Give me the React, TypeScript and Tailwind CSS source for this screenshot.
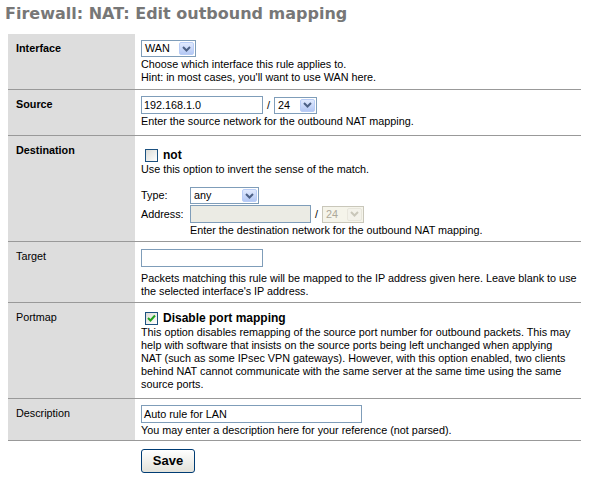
import React from "react";

const font = { fontFamily: '"Liberation Sans", Arial, sans-serif' };
const titleFont = { fontFamily: '"DejaVu Sans", Verdana, sans-serif' };

function Chevron({ disabled }: { disabled?: boolean }) {
  return (
    <svg width="9" height="6" viewBox="0 0 9 6">
      <path
        d="M1 1 L4.5 4.5 L8 1"
        fill="none"
        stroke={disabled ? "#c9c7ba" : "#4d6185"}
        strokeWidth="2"
      />
    </svg>
  );
}

function Select({ value, width, disabled }: { value: string; width: string; disabled?: boolean }) {
  return (
    <div
      className={`flex h-[17px] items-stretch border ${
        disabled ? "border-[#c9c7ba] bg-[#f5f4ea] text-[#aca899]" : "border-[#7f9db9] bg-white text-black"
      } ${width}`}
    >
      <span className="flex-1 pl-[3px] leading-[15px]">{value}</span>
      <span
        className={`m-px flex w-[15px] items-center justify-center rounded-[2px] border ${
          disabled
            ? "border-[#e8e6dc] bg-[#f3f2ea]"
            : "border-[#b9cdf6] bg-gradient-to-b from-[#e1eafe] to-[#b4c8f4]"
        }`}
      >
        <Chevron disabled={disabled} />
      </span>
    </div>
  );
}

function Input({ value, width, disabled }: { value?: string; width: string; disabled?: boolean }) {
  return (
    <div
      className={`h-[18px] border border-[#7f9db9] px-[2px] leading-[16px] ${
        disabled ? "bg-[#ebebe4]" : "bg-white"
      } ${width}`}
    >
      {value}
    </div>
  );
}

function Checkbox({ checked }: { checked?: boolean }) {
  return (
    <span className="inline-flex h-[13px] w-[13px] items-center justify-center border border-[#1c5180] bg-gradient-to-br from-[#dcdcd7] to-white">
      {checked && (
        <svg width="9" height="9" viewBox="0 0 9 9">
          <path d="M1 4 L3.5 6.5 L8 1.5" fill="none" stroke="#21a121" strokeWidth="2" />
        </svg>
      )}
    </span>
  );
}

function Row({
  label,
  bold,
  children,
  className = "",
}: {
  label: string;
  bold?: boolean;
  children: React.ReactNode;
  className?: string;
}) {
  return (
    <div className={`flex border-b border-[#999999] ${className}`}>
      <div className={`w-[127px] shrink-0 bg-[#dddddd] px-[8px] pt-[8px] ${bold ? "font-bold" : ""}`}>
        {label}
      </div>
      <div className="flex-1 px-[6px] pt-[6px] pb-[6px]">{children}</div>
    </div>
  );
}

export default function App() {
  return (
    <div className="min-h-[478px] w-[589px] bg-white text-[10.8px] leading-[13px] text-black" style={font}>
      <h1
        className="pl-[5px] pt-[3px] text-[16px] font-bold leading-[22px] text-[#777777]"
        style={titleFont}
      >
        Firewall: NAT: Edit outbound mapping
      </h1>
      <div className="mt-[9px] ml-[8px] w-[573px]">
        <Row label="Interface" bold className="h-[56px]">
          <Select value="WAN" width="w-[55px]" />
          <div className="mt-[1px]">Choose which interface this rule applies to.</div>
          <div>Hint: in most cases, you'll want to use WAN here.</div>
        </Row>
        <Row label="Source" bold className="h-[46px]">
          <div className="flex items-center gap-[4px]">
            <Input value="192.168.1.0" width="w-[122px]" />
            <span>/</span>
            <Select value="24" width="w-[43px]" />
          </div>
          <div className="mt-[1px]">Enter the source network for the outbound NAT mapping.</div>
        </Row>
        <Row label="Destination" bold className="h-[106px]">
          <div className="mt-[7px] flex items-center gap-[5px] pl-[4px]">
            <Checkbox />
            <span className="text-[12px] font-bold leading-[13px]">not</span>
          </div>
          <div className="mt-[1px]">Use this option to invert the sense of the match.</div>
          <div className="mt-[11px] grid grid-cols-[49px_auto] items-center gap-y-[1px]">
            <span>Type:</span>
            <Select value="any" width="w-[69px]" />
            <span>Address:</span>
            <div className="flex items-center gap-[4px]">
              <Input width="w-[121px]" disabled />
              <span>/</span>
              <Select value="24" width="w-[42px]" disabled />
            </div>
            <span />
            <span>Enter the destination network for the outbound NAT mapping.</span>
          </div>
        </Row>
        <Row label="Target" className="h-[61px]">
          <div className="pt-px">
            <Input width="w-[122px]" />
          </div>
          <div className="mt-[5px] whitespace-nowrap">
            Packets matching this rule will be mapped to the IP address given here. Leave blank to use
            <br />
            the selected interface's IP address.
          </div>
        </Row>
        <Row label="Portmap" className="h-[96px]">
          <div className="mt-[2px] flex items-center gap-[5px] pl-[4px]">
            <Checkbox checked />
            <span className="text-[12px] font-bold leading-[14px]">Disable port mapping</span>
          </div>
          <div className="mt-[1px] whitespace-nowrap">
            This option disables remapping of the source port number for outbound packets. This may
            <br />
            help with software that insists on the source ports being left unchanged when applying
            <br />
            NAT (such as some IPsec VPN gateways). However, with this option enabled, two clients
            <br />
            behind NAT cannot communicate with the same server at the same time using the same
            <br />
            source ports.
          </div>
        </Row>
        <Row label="Description" className="h-[42px]">
          <Input value="Auto rule for LAN" width="w-[221px]" />
          <div className="mt-[1px]">You may enter a description here for your reference (not parsed).</div>
        </Row>
        <div className="flex">
          <div className="w-[127px] shrink-0" />
          <div className="px-[6px] pt-[8px]">
            <button className="h-[24px] w-[54px] rounded-[3px] border border-[#003c74] bg-gradient-to-b from-white to-[#e3e2da] text-[13px] font-bold leading-[20px]">
              Save
            </button>
          </div>
        </div>
      </div>
    </div>
  );
}
